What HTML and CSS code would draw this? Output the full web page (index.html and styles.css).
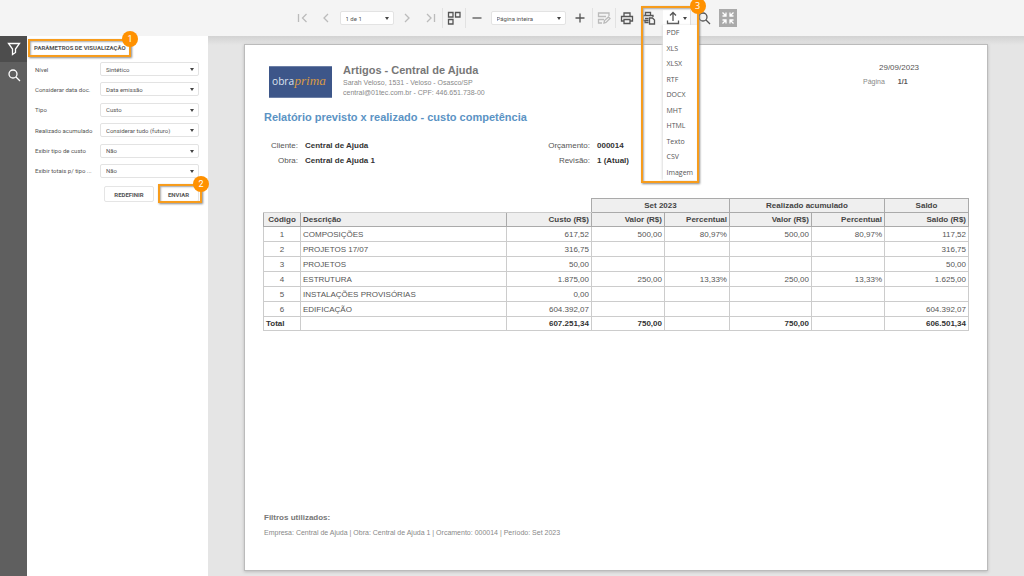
FILE: index.html
```html
<!DOCTYPE html>
<html lang="pt-BR">
<head>
<meta charset="utf-8">
<meta name="viewport" content="width=device-width, initial-scale=1">
<title>Relatório previsto x realizado</title>
<link rel="stylesheet" href="styles.css">
</head>
<body>
<header class="toolbar" role="toolbar" aria-label="Visualizador">
  <button class="tool faded" aria-label="Primeira página"><svg viewBox="0 0 14 14"><path d="M2.500 3v8M10.500 3l-4 4 4 4"/></svg></button>
  <button class="tool faded" aria-label="Página anterior"><svg viewBox="0 0 14 14"><path d="M9 3L5 7l4 4"/></svg></button>
  <span class="select page-select"><select aria-label="Página"><option>1 de 1</option></select></span>
  <button class="tool faded" aria-label="Próxima página"><svg viewBox="0 0 14 14"><path d="M5 3l4 4-4 4"/></svg></button>
  <button class="tool faded" aria-label="Última página"><svg viewBox="0 0 14 14"><path d="M11.500 3v8M4 3l4 4-4 4"/></svg></button>
  <button class="tool ruled" aria-label="Múltiplas páginas"><svg viewBox="0 0 14 14"><path d="M1.500 1.500h4.500v4.500h-4.500zM8.500 1.500h4.500v4.500h-4.500zM1.500 8.500h4.500v4.500h-4.500z"/></svg></button>
  <button class="tool ruled" aria-label="Reduzir"><svg viewBox="0 0 14 14"><path d="M2.500 7h9"/></svg></button>
  <span class="select zoom-select"><select aria-label="Zoom"><option>Página inteira</option></select></span>
  <button class="tool" aria-label="Ampliar"><svg viewBox="0 0 14 14"><path d="M2.500 7h9M7 2.500v9"/></svg></button>
  <button class="tool ruled faded" aria-label="Realçar campos"><svg viewBox="0 0 14 14"><path d="M12 5V2H1.500v3.500H9M7 8.500H1.500V12H5M7 12l.5-2.500 4-3.500 1.500 1.500-4 4z"/></svg></button>
  <button class="tool ruled" aria-label="Imprimir"><svg viewBox="0 0 14 14"><path d="M4 5V2h6v3M4 10H1.500V5.500h11V10H10M4 8.500h6v4H4z"/></svg></button>
  <button class="tool" aria-label="Imprimir página"><svg viewBox="0 0 14 14"><path d="M3.500 4.500v-3h5v3M6.500 9.500H3v2h3.500M3 9.500H1v-5h10V6M3 7.500h3.500M7.500 7h3l2 2v4h-5z"/></svg></button>
  <div class="export">
    <button class="tool export-button" aria-label="Exportar" aria-expanded="true"><svg viewBox="0 0 14 14"><path d="M7 10V2M4 4.500l3-3 3 3M1.500 9.500v3h11v-3"/></svg><i class="caret"></i></button>
    <div class="menu" role="menu">
      <button role="menuitem">PDF</button>
      <button role="menuitem">XLS</button>
      <button role="menuitem">XLSX</button>
      <button role="menuitem">RTF</button>
      <button role="menuitem">DOCX</button>
      <button role="menuitem">MHT</button>
      <button role="menuitem">HTML</button>
      <button role="menuitem">Texto</button>
      <button role="menuitem">CSV</button>
      <button role="menuitem">Imagem</button>
    </div>
    <div class="callout callout-export"><span class="badge">3</span></div>
  </div>
  <button class="tool search" aria-label="Pesquisar"><svg viewBox="0 0 14 14"><circle cx="6" cy="6" r="4"/><path d="M9 9l4 4"/></svg></button>
  <button class="fullscreen" aria-label="Tela cheia"><svg viewBox="0 0 16 16"><path d="M2.500 2.500l3 3M6 2.500V6H2.500M13.500 2.500l-3 3M10 2.500V6h3.500M2.500 13.500l3-3M6 13.500V10H2.500M13.500 13.500l-3-3M10 13.500V10h3.500"/></svg></button>
</header>

<div class="workspace">
  <nav class="rail" aria-label="Painéis">
    <button class="rail-tab active" aria-label="Parâmetros"><svg viewBox="0 0 14 14"><path d="M1.500 1.500h11L8.500 7v3.500l-3 2V7z"/></svg></button>
    <button class="rail-tab" aria-label="Pesquisar"><svg viewBox="0 0 14 14"><circle cx="6" cy="6" r="4"/><path d="M9 9l4 4"/></svg></button>
  </nav>

  <aside class="panel">
    <h2 class="panel-title">PARÂMETROS DE VISUALIZAÇÃO<span class="callout callout-title"><span class="badge">1</span></span></h2>
    <form class="params">
      <div class="fields">
        <label for="nivel">Nível</label>
        <span class="select"><select id="nivel"><option>Sintético</option></select></span>
        <label for="data">Considerar data doc.</label>
        <span class="select"><select id="data"><option>Data emissão</option></select></span>
        <label for="tipo">Tipo</label>
        <span class="select"><select id="tipo"><option>Custo</option></select></span>
        <label for="realizado">Realizado acumulado</label>
        <span class="select"><select id="realizado"><option>Considerar tudo (futuro)</option></select></span>
        <label for="exibir">Exibir tipo de custo</label>
        <span class="select"><select id="exibir"><option>Não</option></select></span>
        <label for="totais">Exibir totais p/ tipo ...</label>
        <span class="select"><select id="totais"><option>Não</option></select></span>
      </div>
      <div class="actions">
        <button type="reset">REDEFINIR</button>
        <button type="button" class="send">ENVIAR<span class="callout callout-send"><span class="badge">2</span></span></button>
      </div>
    </form>
  </aside>

  <main class="viewer">
    <article class="sheet">
      <header class="letterhead">
        <svg class="logo" viewBox="0 0 62 31" role="img" aria-label="obra prima"><rect width="62" height="31" fill="#3d5689"/><text x="3" y="18" class="logo-obra">obra</text><text x="25" y="18" class="logo-prima">prima</text></svg>
        <div class="company">
          <h1>Artigos - Central de Ajuda</h1>
          <p>Sarah Veloso, 1531 - Veloso - Osasco/SP</p>
          <p>central@01tec.com.br - CPF: 446.651.738-00</p>
        </div>
        <div class="issue">
          <p class="date">29/09/2023</p>
          <p><span>Página</span><b>1/1</b></p>
        </div>
      </header>
      <h2 class="report-title">Relatório previsto x realizado - custo competência</h2>
      <div class="meta">
        <dl class="client">
          <dt>Cliente:</dt><dd>Central de Ajuda</dd>
          <dt>Obra:</dt><dd>Central de Ajuda 1</dd>
        </dl>
        <dl class="budget">
          <dt>Orçamento:</dt><dd>000014</dd>
          <dt>Revisão:</dt><dd>1 (Atual)</dd>
        </dl>
      </div>
      <table class="report">
        <colgroup><col class="c-code"><col><col class="c-cost"><col class="c-value"><col class="c-percent"><col class="c-total"><col class="c-value"><col class="c-balance"></colgroup>
        <thead>
          <tr><td colspan="3" class="blank"></td><th colspan="2" scope="colgroup">Set 2023</th><th colspan="2" scope="colgroup">Realizado acumulado</th><th scope="colgroup">Saldo</th></tr>
          <tr class="heads"><th>Código</th><th>Descrição</th><th>Custo (R$)</th><th>Valor (R$)</th><th>Percentual</th><th>Valor (R$)</th><th>Percentual</th><th>Saldo (R$)</th></tr>
        </thead>
        <tbody>
          <tr><td>1</td><td>COMPOSIÇÕES</td><td>617,52</td><td>500,00</td><td>80,97%</td><td>500,00</td><td>80,97%</td><td>117,52</td></tr>
          <tr><td>2</td><td>PROJETOS 17/07</td><td>316,75</td><td></td><td></td><td></td><td></td><td>316,75</td></tr>
          <tr><td>3</td><td>PROJETOS</td><td>50,00</td><td></td><td></td><td></td><td></td><td>50,00</td></tr>
          <tr><td>4</td><td>ESTRUTURA</td><td>1.875,00</td><td>250,00</td><td>13,33%</td><td>250,00</td><td>13,33%</td><td>1.625,00</td></tr>
          <tr><td>5</td><td>INSTALAÇÕES PROVISÓRIAS</td><td>0,00</td><td></td><td></td><td></td><td></td><td></td></tr>
          <tr><td>6</td><td>EDIFICAÇÃO</td><td>604.392,07</td><td></td><td></td><td></td><td></td><td>604.392,07</td></tr>
        </tbody>
        <tfoot>
          <tr><td>Total</td><td></td><td>607.251,34</td><td>750,00</td><td></td><td>750,00</td><td></td><td>606.501,34</td></tr>
        </tfoot>
      </table>
      <footer class="filters">
        <h3>Filtros utilizados:</h3>
        <p>Empresa: Central de Ajuda | Obra: Central de Ajuda 1 | Orcamento: 000014 | Período: Set 2023</p>
      </footer>
    </article>
  </main>
</div>
</body>
</html>
```

FILE: styles.css
```css
* { box-sizing: border-box; }
h1, h2, h3, p, dl, dd { margin: 0; }

body {
  margin: 0;
  min-height: 100vh;
  display: flex;
  flex-direction: column;
  background: #e5e5e5;
  font-family: "Open Sans", "Noto Sans", sans-serif;
  font-size: 6px;
  color: #555;
}

button, select { font: inherit; color: inherit; }
button { border: 0; padding: 0; background: none; }
svg { fill: none; stroke: currentColor; stroke-width: 1.3; }

/* Toolbar */
.toolbar {
  height: 36px;
  display: flex;
  align-items: center;
  justify-content: center;
  padding-left: 4px;
  background: #f4f4f4;
}
.tool {
  width: 23px;
  height: 20px;
  display: flex;
  align-items: center;
  justify-content: center;
  color: #555;
}
.tool svg { width: 14px; height: 14px; }
.faded { color: #bbb; }
.ruled { border-left: 1px solid #e2e2e2; }

.select { position: relative; display: block; }
.select select {
  appearance: none;
  display: block;
  width: 100%;
  height: 14px;
  padding: 0 12px 0 5px;
  border: 1px solid #e3e3e3;
  border-radius: 2px;
  background: #fff;
}
.select::after, .caret {
  border: 2px solid transparent;
  border-top: 3px solid #444;
  border-bottom: 0;
}
.select::after {
  content: "";
  position: absolute;
  right: 5px;
  top: 6px;
}
.page-select { width: 54px; margin: 0 2px; }
.zoom-select { width: 75px; margin: 0 3px; }
.toolbar .select { font-family: Roboto, sans-serif; }

.export { position: relative; margin-left: 2px; }
.export-button {
  width: 28px;
  height: 16px;
  gap: 3px;
  background: #fff;
  border-right: 1px solid #ddd;
}
.menu {
  position: absolute;
  z-index: 2;
  top: 15px;
  left: 0;
  width: 35px;
  height: 155px;
  display: flex;
  flex-direction: column;
  background: #fff;
  box-shadow: -1px 0 2px #ddd;
}
.menu button {
  flex: 1;
  padding-left: 4px;
  text-align: left;
  font-size: 7px;
  line-height: 15px;
}
.search { margin-left: 2px; }
.fullscreen {
  width: 18px;
  height: 18px;
  margin-left: 3px;
  display: grid;
  place-items: center;
  background: #aaa;
  color: #fff;
}
.fullscreen svg { width: 16px; height: 16px; }

/* Numbered callouts */
.callout {
  position: absolute;
  z-index: 3;
  border: 2px solid #f79c1c;
  box-shadow: 1px 1px 2px #888, inset 1px 1px 2px #aaa;
}
.badge {
  position: absolute;
  top: -10px;
  right: -9px;
  width: 16px;
  height: 16px;
  border-radius: 50%;
  background: #ff9100;
  color: #fff;
  font-size: 9px;
  font-weight: 400;
  line-height: 16px;
  text-align: center;
}
.callout-export { top: -4px; left: -22px; width: 58px; height: 177px; }
.callout-title { inset: 0; }
.callout-send { inset: -3px -4px -2px -1px; }

/* Side rail and parameter panel */
.workspace { flex: 1; display: flex; }
.rail { width: 27px; background: #5f5f5f; }
.rail-tab {
  width: 100%;
  height: 26px;
  display: grid;
  place-items: center;
  color: #fff;
}
.rail-tab svg { width: 14px; height: 14px; }
.rail-tab.active { background: #4d4d4d; }

.panel {
  width: 181px;
  padding: 3px 9px 0 1px;
  background: #fff;
  font-family: Roboto, sans-serif;
}
.panel-title {
  position: relative;
  width: 103px;
  padding-left: 6px;
  font-size: 6px;
  line-height: 18px;
  white-space: nowrap;
}
.params { padding: 5px 0 0 7px; }
.fields {
  height: 116px;
  display: grid;
  grid-template-columns: 65px 1fr;
  align-content: space-between;
  align-items: center;
}
.actions {
  display: flex;
  justify-content: flex-end;
  gap: 4px;
  padding-top: 8px;
}
.actions button {
  position: relative;
  width: 50px;
  height: 16px;
  border: 1px solid #e5e5e5;
  border-radius: 2px;
  font-weight: 700;
}
.actions .send { width: 41px; }

/* Report sheet */
.viewer {
  flex: 1;
  display: flex;
  padding: 8px 36px 5px;
  background: linear-gradient(#d2d2d2, #e5e5e5 9px);
}
.sheet {
  flex: 1;
  display: flex;
  flex-direction: column;
  padding: 19px 18px 32px;
  border: 1px solid #bbb;
  background: #fff;
  box-shadow: 0 1px 3px #bbb;
  font-family: "Liberation Sans", Arial, sans-serif;
  font-size: 8px;
}
.letterhead { display: flex; font-size: 7px; color: #888; }
.logo { width: 63px; height: 32px; margin: 2px 11px 0 6px; stroke: none; }
.logo-obra { fill: #dde3ee; font: 10px "Open Sans", sans-serif; }
.logo-prima { fill: #d99a45; font: italic 13px "Liberation Serif", serif; }
.company h1 { font-size: 11px; line-height: 12px; color: #777; }
.company p { line-height: 10px; }
.company p:first-of-type { padding-top: 2px; }
.issue {
  margin-left: auto;
  width: 106px;
  line-height: 14px;
}
.issue .date { padding-left: 16px; margin-top: -3px; color: #555; font-size: 8px; }
.issue b { margin-left: 13px; color: #555; }
.report-title {
  padding: 11px 0 0 1px;
  font-size: 11px;
  line-height: 16px;
  color: #5b93c4;
}
.meta { display: flex; padding-top: 13px; }
.meta dl {
  display: grid;
  column-gap: 7px;
  line-height: 15px;
}
.meta dt { text-align: right; }
.meta dd { font-weight: 700; color: #333; }
.client { grid-template-columns: 35px 242px; }
.budget { grid-template-columns: 43px 60px; }

.report {
  width: 100%;
  height: 133px;
  margin-top: 30px;
  table-layout: fixed;
  border-collapse: collapse;
  line-height: 12px;
}
.c-code { width: 37px; }
.c-cost { width: 85px; }
.c-value { width: 73px; }
.c-percent { width: 65px; }
.c-total { width: 82px; }
.c-balance { width: 84px; }
.report th, .report td { padding: 1px 2px 0; border: 1px solid #ccc; text-align: right; }
.report thead th { background: #efefef; border-color: #aaa; color: #444; }
.report thead tr:first-child th { text-align: center; }
.report thead .blank { border-width: 0 0 1px; }
.report tr > :first-child { text-align: center; }
.report tr > :nth-child(2) { text-align: left; }
.report tfoot { font-weight: 700; color: #333; }
.report tfoot tr > :first-child { text-align: left; }

.filters { margin-top: auto; padding-left: 1px; color: #888; font-size: 7px; }
.filters h3 { font-size: 8px; line-height: 12px; color: #777; }
.filters p { padding-top: 4px; line-height: 10px; }
```
